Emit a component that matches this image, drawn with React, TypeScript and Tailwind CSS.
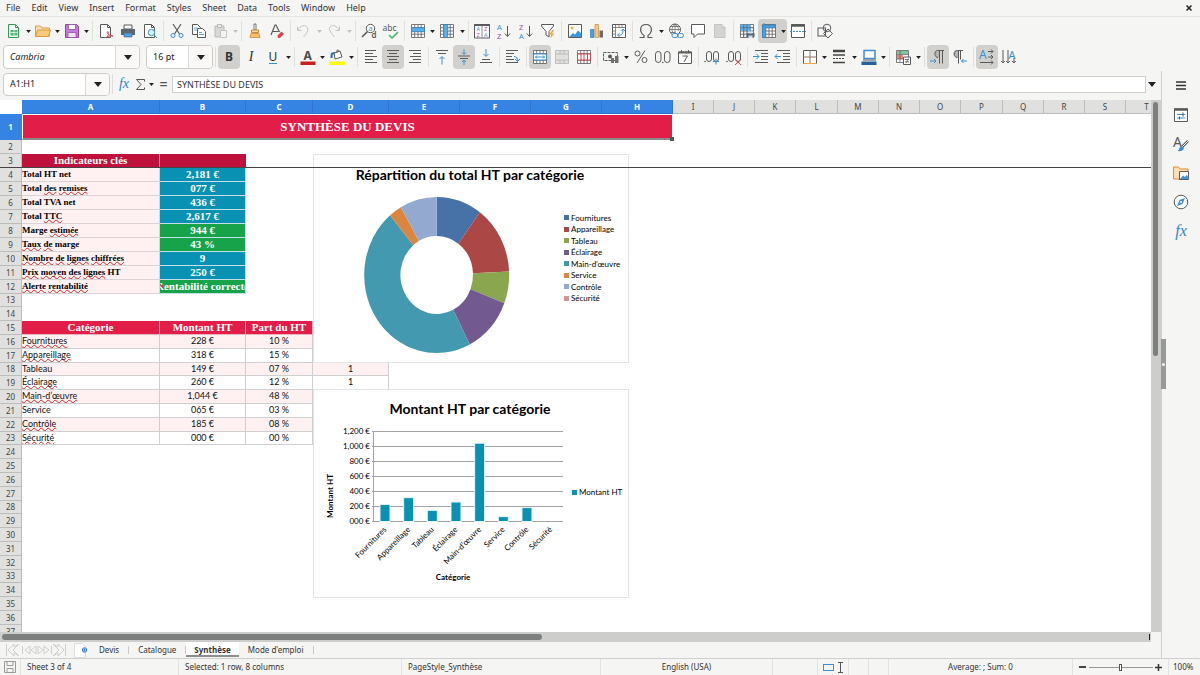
import type { ReactNode } from 'react'
import clsx from 'clsx'

const G = '#5a5a5a'
const B = '#3b8fd4'

const grid = <path d="M1.5 1.5h13v13h-13zM1.5 4.700h13M1.5 8h13M1.5 11.200h13M4.700 1.500v13M8 1.500v13M11.200 1.500v13" fill="#fff" stroke={G} strokeWidth=".8" />

const lines = (rows: number[][]) => rows.map(([x, y, w], i) => <path key={i} d={`M${x} ${y}h${w}`} stroke={G} />)

const icons: Record<string, ReactNode> = {
  new: <><path d="M2.500 1.500h7l3 3v10h-10z" fill="#fff" stroke="#2f9e52" /><path d="M9.500 1.500v3h3" fill="none" stroke="#2f9e52" /><path d="M4.500 7h7v5.500h-7z" fill="#52b373" /><path d="M4.500 9.500h7M8 7v5" stroke="#fff" strokeWidth=".7" /></>,
  open: <><path d="M.5 13V3h5L7 5h7.500v8z" fill="#fbe0ae" stroke="#dc9a45" /><path d="M.5 13.500l2-6.500h13l-2 6.500z" fill="#fbc877" stroke="#dc9a45" /></>,
  save: <><path d="M1.500 1.500h11l2 2v11h-13z" fill="#c77bd6" stroke="#91429f" /><path d="M4.500 1.500h7v5h-7z" fill="#fff" stroke="#91429f" strokeWidth=".7" /><path d="M4 9.500h8v5H4z" fill="#f2e4f5" stroke="#91429f" strokeWidth=".7" /></>,
  pdf: <><path d="M2.500 1.500h7l3 3v10h-10z" fill="#fff" stroke={G} /><path d="M9.500 1.500v3h3" fill="none" stroke={G} /><path d="M8 15c3-3 3-5 2-6.500-2 1 0 4 5 4.500-3-.5-5 0-7 2z" fill="none" stroke="#d9434e" /></>,
  print: <><path d="M4 2h8v4H4z" fill="#fff" stroke={G} /><path d="M1 6h14v6H1z" fill="#5c6670" /><path d="M4 10h8v4H4z" fill="#4ba0e0" stroke="#5c6670" strokeWidth=".7" /></>,
  preview: <><path d="M2.500 1.500h7l3 3v10h-10z" fill="#fff" stroke={G} /><path d="M9.500 1.500v3h3" fill="none" stroke={G} /><circle cx="9.500" cy="9.500" r="3.200" fill="#d9ecfa" stroke={B} /><path d="M12 12l3 3" stroke={B} /></>,
  cut: <><path d="M4 1l6.500 10M12 1L5.500 11" stroke={G} strokeWidth="1.200" /><circle cx="4" cy="12.500" r="2" fill="none" stroke={B} /><circle cx="12" cy="12.500" r="2" fill="none" stroke={B} /></>,
  copy: <><path d="M1.500 1.500h5l3 3v7h-8z" fill="#fff" stroke={G} /><path d="M6.500 5.500h5l3 3v6h-8z" fill="#fff" stroke={G} /><path d="M3 5h3M3 7h3M8 9.500h3M8 11.500h5" stroke={B} strokeWidth=".8" /></>,
  paste: <><path d="M2 3h9v11H2z" fill="#d8d8d6" stroke="#b9b9b7" /><path d="M4.500 1.500h4v3h-4z" fill="#eee" stroke="#b9b9b7" /><path d="M7.500 7.500h6v7h-6z" fill="#f3f3f2" stroke="#c4c4c2" /></>,
  brush: <><path d="M7 1h2v6H7z" fill="#fff" stroke={G} strokeWidth=".8" /><path d="M4.500 7h7v2.500h-7z" fill="#fbd9a5" stroke="#cf8a3a" /><path d="M4 10.500h8l1 4H3z" fill="#f9bf6d" stroke="#cf8a3a" strokeWidth=".8" /></>,
  clear: <><path d="M2 12L6 2h1l3.500 7M3.500 8.500h6" fill="none" stroke={G} strokeWidth="1.200" /><path d="M8.500 12.500l4-4 2.500 2.500-4 4H9z" fill="#e0444f" /></>,
  undo: <path d="M1.500 3.500v4h4M2 7c2-4 6-5.500 8.500-3.500S12 9 7.500 14" fill="none" stroke="#c4c4c2" />,
  redo: <path d="M13.500 3.500v4h-4M13 7c-2-4-6-5.500-8.500-3.500S4 9 8.500 14" fill="none" stroke="#c4c4c2" />,
  find: <><circle cx="9.500" cy="5.500" r="4.200" fill="#fff" stroke={G} /><path d="M6.500 8.500L1 14" stroke={G} strokeWidth="1.600" /><text x="7.500" y="8" fontSize="7" fill={B}>a</text><text x="10.500" y="15" fontSize="8" fontWeight="600" fill={G}>d</text></>,
  spell: <><text x="-.5" y="7.500" fontSize="8.500" fill={G}>abc</text><path d="M6 12l3 3 6-6" fill="none" stroke="#3fb26d" strokeWidth="1.500" /></>,
  rowIns: <>{grid}<path d="M1.500 4.700h13v4h-13z" fill="#5aaeea" stroke="#2f7fbf" strokeWidth=".7" /></>,
  colIns: <>{grid}<path d="M4.700 1.500h4v13h-4z" fill="#5aaeea" stroke="#2f7fbf" strokeWidth=".7" /></>,
  sort: <><path d="M.5 1.500h15v13.500H.5z" fill="#fff" stroke={G} /><path d="M.5 2h15" stroke={G} strokeWidth="2" /><path d="M8 2v12.500" stroke={G} strokeWidth=".7" /><text x="2.500" y="8" fontSize="5.500" fill={B}>A</text><text x="2.500" y="14" fontSize="5.500" fill="#a34fb5">Z</text><text x="10" y="8" fontSize="5.500" fill="#a34fb5">Z</text><text x="10" y="14" fontSize="5.500" fill={B}>A</text></>,
  asc: <><text x="1" y="7" fontSize="7.500" fill={B}>A</text><text x="1" y="15.500" fontSize="7.500" fill="#a34fb5">Z</text><path d="M11.500 3v10M8.800 10.500l2.700 3 2.700-3" fill="none" stroke={G} /></>,
  desc: <><text x="1" y="7" fontSize="7.500" fill="#a34fb5">Z</text><text x="1" y="15.500" fontSize="7.500" fill={B}>A</text><path d="M11.500 3v10M8.800 10.500l2.700 3 2.700-3" fill="none" stroke={G} /></>,
  filter: <><path d="M1.500 1.500h12v1.500L9 8.500V14l-3-2V8.500L1.500 3z" fill="#fff" stroke={G} /><path d="M12.500 7L9 11.500h2.500L10 15.500l4.500-5H12l2-3.500z" fill="#f3a445" /></>,
  image: <><path d="M1.500 1.500h13v13h-13z" fill="#fff" stroke={G} /><path d="M2 14l4-4 2 1.500 3-4 3.500 3V14z" fill="#3f97da" /><circle cx="5" cy="5" r="1.500" fill="#f3b34c" /></>,
  chart: <><path d="M1.500 6.500h3.500v8H1.500z" fill="#4ba0e0" stroke="#2f7fbf" strokeWidth=".7" /><path d="M6 1.500h3.500v13H6z" fill="#fbc877" stroke="#cf8a3a" strokeWidth=".7" /><path d="M10.500 7.500H14v7h-3.500z" fill="#6c6c6c" /></>,
  pivot: <><path d="M1.500 1.500h13v13h-13z" fill="#fff" stroke={G} /><path d="M1.500 4.500h13M4.500 1.500v13M8 1.500v3M11 1.500v3M1.500 8h3M1.500 11h3" stroke={G} strokeWidth=".7" /><path d="M7 12c4 1 5-2 5-5M10.500 8L12 6l1.800 2M8.500 10.500L6.500 12l2 1.700" fill="none" stroke={B} /></>,
  omega: <path d="M1.500 14.500h4.500v-2C1 9 1.500 1.500 8 1.500s7 7.500 2 11v2h4.500" fill="none" stroke={G} strokeWidth="1.200" />,
  link: <><circle cx="7" cy="6.500" r="5.500" fill="#fff" stroke={G} /><path d="M1.500 6.500h11M7 1v11M2.500 3.500h9M2.500 9.500h5M7 1C3 4 3 9 7 12M7 1c4 3 3.500 6 3 7" fill="none" stroke={G} strokeWidth=".7" /><rect x="4" y="10.500" width="6" height="4" rx="2" fill="#f5f5f4" stroke={B} /><rect x="9.500" y="10.500" width="6" height="4" rx="2" fill="none" stroke={B} /></>,
  comment: <path d="M1.500 1.500h13v9.500h-7L4 14.500V11H1.500z" fill="#fff" stroke={G} />,
  header: <><path d="M2.500 1.500h7.500l3 3v10H2.500z" fill="#d4d4d2" stroke="#c4c4c2" /><path d="M10 1.500v3h3" fill="#eee" stroke="#bbb" strokeWidth=".7" /></>,
  printArea: <>{grid}<path d="M1.500 1.500h10v6.500h-10z" fill="#5aaeea" /><path d="M1.500 4.700h13M4.700 1.500v13M8 1.500v8" stroke={G} strokeWidth=".6" /><path d="M7.500 10h8v4h-8z" fill="#5c6670" /><path d="M9.500 8.500h4v2h-4zM9.500 12.500h4v2.500h-4z" fill="#cfe4f5" /></>,
  freeze: <>{grid}<path d="M3 2h11.500v2.700H4.700v9.800H1.500V4z" fill="#4ba0e0" stroke="#2f7fbf" strokeWidth=".7" /><path d="M3 0v5M.5 2.500h5" stroke={B} /></>,
  split: <><path d="M1.500 1.500h13v13h-13z" fill="#fff" stroke={G} /><path d="M1 2.500h14" stroke={G} strokeWidth="2.500" /><path d="M0 8.500h16" stroke={B} strokeDasharray="2 1" /></>,
  shapes: <><rect x="1" y="5" width="7.500" height="8" fill="none" stroke={G} /><circle cx="10" cy="5" r="3.800" fill="none" stroke={G} /><path d="M11 6l4.500 4.500L11 15l-4.500-4.500z" fill="none" stroke={G} /></>,
  fontColor: <><text x="3.500" y="10.500" fontSize="12" fontWeight="700" fill="#4a4a4a">A</text><path d="M.5 12.500h15v3.500H.5z" fill="#c9211e" /></>,
  fill: <><path d="M5 4l6-2 2 6-7 2z" fill="#fff" stroke={G} /><path d="M8 4c-1-4 2-4 2-1" fill="none" stroke={G} /><path d="M2.500 9c0-4 0-5 3-5" fill="none" stroke="#1c6fb5" strokeWidth="2" /><path d="M0 12.500h16v3.500H0z" fill="#ffff00" /></>,
  left: lines([[2, 1.500, 11], [2, 4.500, 8], [2, 7.500, 12], [2, 10.500, 8], [2, 13.500, 12]]),
  center: lines([[2, 1.500, 12], [4, 4.500, 8], [2, 7.500, 12], [4, 10.500, 8], [2, 13.500, 12]]),
  right: lines([[2, 1.500, 12], [6, 4.500, 8], [3, 7.500, 11], [6, 10.500, 8], [2, 13.500, 12]]),
  top: <>{lines([[2, 1.500, 12], [4, 4.500, 8]])}<path d="M8 15.500V8M5.500 10L8 7.500l2.500 2.500" fill="none" stroke={B} /></>,
  middle: <>{lines([[2, 7, 12], [4, 9.500, 8]])}<path d="M8 .5v4.500M6 3.500l2 2 2-2M8 16v-4.500M6 13l2-2 2 2" fill="none" stroke={B} /></>,
  bottom: <>{lines([[4, 10.500, 8], [2, 13.500, 12]])}<path d="M8 0v7M5.500 5L8 7.500 10.500 5" fill="none" stroke={B} /></>,
  wrap: <>{lines([[1, 1.500, 12], [1, 4.500, 8], [1, 7.500, 6], [1, 10.500, 8], [1, 13.500, 12]])}<path d="M9 7.500c3 0 3.500 2 3.500 4.500M10 10l2.500 2.500L15 10" fill="none" stroke={B} /></>,
  merge: <>{grid}<path d="M1.500 5h13v6h-13z" fill="#fff" stroke={B} /><path d="M3.500 8h9M5 6.500L3.500 8 5 9.500M11 6.500L12.500 8 11 9.500" fill="none" stroke={B} /></>,
  unmerge: <path d="M1.500 1.500h13v13h-13zM1.500 5h13M1.500 11h13M6 1.500V5M10 1.500V5M6 11v3.500M10 11v3.500" fill="#e0e0de" stroke="#b5b5b3" strokeWidth=".8" />,
  splitCells: <>{grid}<path d="M1.500 5h13v6h-13zM5 5v6M8 5v6M11.500 5v6" fill="#fff" stroke="#e0444f" /></>,
  currency: <><path d="M.5 3.500h14v8h-14z" fill="#f3f3f2" stroke={G} strokeDasharray="3 1" /><circle cx="7" cy="7.500" r="2" fill={G} /><path d="M8 9h3v5H8zM12 7h3.500v7H12z" fill="#707070" /></>,
  percent: <><circle cx="4.500" cy="4.500" r="2.500" fill="none" stroke={G} /><circle cx="11.500" cy="11" r="2.500" fill="none" stroke={G} /><path d="M12 1.500l-8 12.500" stroke={G} /></>,
  number: <><rect x=".5" y="2.500" width="5.500" height="11" rx="2.700" fill="none" stroke={G} /><rect x="9.500" y="2.500" width="5.500" height="11" rx="2.700" fill="none" stroke={G} /><circle cx="7.800" cy="13.500" r=".8" fill={G} /></>,
  date: <><path d="M1.500 3h13v11.500h-13z" fill="#fff" stroke={G} /><path d="M1.500 3.500h13" stroke={G} strokeWidth="2" /><path d="M4.500 1v3M11.500 1v3M5.500 7h5l-3.500 6" fill="none" stroke={G} /></>,
  addDec: <><circle cx="1" cy="12.500" r=".8" fill={G} /><rect x="2.500" y="2.500" width="5" height="10" rx="2.500" fill="none" stroke={G} /><rect x="9.500" y="2.500" width="5" height="10" rx="2.500" fill="none" stroke={G} /><path d="M12 9.500v6M9 12.500h6" stroke={B} /></>,
  delDec: <><circle cx="1" cy="12.500" r=".8" fill={G} /><rect x="2.500" y="2.500" width="5" height="10" rx="2.500" fill="none" stroke={G} /><rect x="9.500" y="2.500" width="5" height="10" rx="2.500" fill="none" stroke={G} /><path d="M9 10l6 6M15 10l-6 6" stroke="#e0444f" /></>,
  indent: <>{lines([[2, 1.500, 13], [8, 4.500, 7], [8, 7.500, 7], [8, 10.500, 7], [2, 13.500, 13]])}<path d="M0 7.500h6M3.500 5L6 7.500 3.500 10" fill="none" stroke={B} /></>,
  outdent: <>{lines([[2, 1.500, 13], [8, 4.500, 7], [8, 7.500, 7], [8, 10.500, 7], [2, 13.500, 13]])}<path d="M0 7.500h6M2.500 5L0 7.500 2.500 10" fill="none" stroke={B} /></>,
  borders: <><path d="M1.500 1.500h13v13h-13z" fill="#fff" stroke={G} /><path d="M8 1.500v13M1.500 8h13" stroke="#8a7a5a" /><path d="M1.500 14.500h13" stroke="#f3a445" /></>,
  lineStyle: <><path d="M2 2h12" stroke="#444" strokeWidth="2.500" /><path d="M2 6h12" stroke="#444" strokeWidth="1.500" /><path d="M2 9.500h12" stroke="#444" strokeDasharray="2 1" /><path d="M2 13.500h12" stroke="#444" strokeWidth="1.500" /></>,
  lineColor: <><path d="M3 1.500h11v8H3z" fill="#fff" stroke={B} strokeWidth="1.500" /><path d="M2 11h13" stroke={G} /><path d="M.5 12.500h15v3.500H.5z" fill="#2a6099" /></>,
  condFmt: <><path d="M1.500 1.500h12v12h-12z" fill="#fff" stroke={G} strokeWidth=".8" /><path d="M2 2h11v3H2z" fill="#7cc596" /><path d="M2 6h6v4H2z" fill="#e8857b" /><path d="M5 1.500v12M1.500 5.500h12M1.500 10h7" stroke={G} strokeWidth=".7" /><path d="M8.500 8h7v7.500h-7z" fill="#fff" stroke={G} /><path d="M10 10.500h4M10 12.800h4M13.500 9.500l-2.500 4.500" stroke={G} strokeWidth=".8" /></>,
  ltr: <><path d="M9.500 1.500v7C3 8.500 3 1.500 8 1.500z" fill="#b5b5b3" /><path d="M14 1.500H7.500C4 1.500 4 8.500 8 8.500M9.500 1.500v13M12.500 1.500v13" fill="none" stroke={G} /><path d="M0 12h6M4 10l2 2-2 2" fill="none" stroke={B} /></>,
  rtl: <><path d="M6.500 1.500v7c-6 0-6-7-2-7z" fill="#b5b5b3" /><path d="M11 1.500H5.500C1 1.500 1 8.500 5.500 8.500M6.500 1.500v13M8.500 1.500v9" fill="none" stroke={G} /><path d="M15 12H9.500M11.500 10l-2 2 2 2" fill="none" stroke={B} /></>,
  horizontal: <><text x="0" y="9.500" fontSize="12" fill={B}>A</text><path d="M9 2.500h5M12 .5l2 2-2 2M9 8h5M12 6l2 2-2 2M1 13.500h13M12 11.500l2 2-2 2" fill="none" stroke={G} /></>,
  vertical: <><text x="7.500" y="9.500" fontSize="11" fill={B}>A</text><path d="M2 1v13M.2 12L2 14l1.800-2M7 1v13M5.200 12L7 14l1.800-2M13 9v5M11.200 12l1.800 2 1.800-2" fill="none" stroke={G} /></>,
  props: <><path d="M1.500 2h13v12.500h-13z" fill="#fff" stroke={G} /><path d="M1 2.500h14" stroke={G} strokeWidth="2.500" /><path d="M4 7.500h8M4 11h8" stroke={B} /><path d="M10 5.500v4M6.500 9.500v3" stroke={G} /></>,
  styles: <><text x="0" y="11" fontSize="14" fill={G}>A</text><path d="M15 5l-6 6" stroke={G} strokeWidth="2.500" /><path d="M15 5l-6 6" stroke="#fff" /><path d="M9 10l2 2c-1 3-3 3.500-7 3 2-.5 2-1.500 2.500-3 .5-1.500 1.500-2 2.500-2z" fill={B} /></>,
  gallery: <><path d="M.5 14V2h5l1.500 2h8v10z" fill="#fbe0ae" stroke="#e08a3a" /><path d="M6.500 6.500h9v8h-9z" fill="#fff" stroke={G} /><path d="M7 14l3-3.500 2 1.500 1.500-2 2 2v2z" fill="#3f97da" /></>,
  navigator: <><circle cx="8" cy="8" r="6.800" fill="#fff" stroke={G} /><path d="M12 4l-2.500 6L4 12l2.500-6z" fill={B} /><circle cx="8" cy="8" r="1" fill="#fff" /></>,
}

function Icon({ name }: { name: string }) {
  return (
    <svg viewBox="0 0 16 16" className="size-4 shrink-0 overflow-visible" fontFamily="Noto Sans, sans-serif">
      {icons[name]}
    </svg>
  )
}

function Caret({ big, dim }: { big?: boolean; dim?: boolean }) {
  return (
    <svg viewBox="0 0 8 5" className={clsx('shrink-0', big ? 'h-[5px] w-2' : 'h-[3px] w-[5px]', dim ? 'fill-[#c0c0be]' : 'fill-[#222]')}>
      <path d="M0 0h8L4 5z" />
    </svg>
  )
}

type ToolProps = { label: string; icon?: string; on?: boolean; drop?: 'narrow' | 'wide'; dim?: boolean; children?: ReactNode }

function Tool({ label, icon, on, drop, dim, children }: ToolProps) {
  return (
    <span className={clsx('flex h-6 shrink-0 rounded-sm', on && 'bg-[#d2d0cc]')}>
      <button aria-label={label} className="flex w-[22px] items-center justify-center">
        {icon ? <Icon name={icon} /> : children}
      </button>
      {drop && (
        <button aria-label={`${label} menu`} className={clsx('flex items-center justify-center', drop === 'wide' ? 'w-2' : 'w-[7px]')}>
          <Caret dim={dim} />
        </button>
      )}
    </span>
  )
}

const Sep = () => <span className="mx-[2px] h-5 w-px shrink-0 self-center bg-[#e0dfdd]" />

function Combo({ label, value, className, italic }: { label: string; value: string; className: string; italic?: boolean }) {
  return (
    <span className={clsx('flex shrink-0 overflow-hidden rounded border border-[#cfccc8] bg-white', className)}>
      <input aria-label={label} defaultValue={value} className={clsx('w-0 flex-1 px-1.5 text-[#222] outline-none', italic && 'italic')} />
      <button aria-label={`${label} list`} className="flex w-6 items-center justify-center border-l border-[#dcdad7] bg-[#faf9f8]">
        <Caret big />
      </button>
    </span>
  )
}

const menus = ['File', 'Edit', 'View', 'Insert', 'Format', 'Styles', 'Sheet', 'Data', 'Tools', 'Window', 'Help']

function StandardBar() {
  return (
    <div className="flex h-7 items-center pl-[3px]">
      <Tool label="New" icon="new" drop="narrow" />
      <Tool label="Open" icon="open" drop="narrow" />
      <Tool label="Save" icon="save" drop="narrow" />
      <Sep />
      <Tool label="Export as PDF" icon="pdf" />
      <Tool label="Print" icon="print" />
      <Tool label="Print preview" icon="preview" />
      <Sep />
      <Tool label="Cut" icon="cut" />
      <Tool label="Copy" icon="copy" />
      <Tool label="Paste" icon="paste" drop="narrow" dim />
      <Sep />
      <Tool label="Clone formatting" icon="brush" />
      <Tool label="Clear formatting" icon="clear" />
      <Sep />
      <Tool label="Undo" icon="undo" drop="wide" dim />
      <Tool label="Redo" icon="redo" drop="wide" dim />
      <Sep />
      <Tool label="Find" icon="find" />
      <Tool label="Spelling" icon="spell" />
      <Sep />
      <Tool label="Row" icon="rowIns" drop="narrow" />
      <Tool label="Column" icon="colIns" drop="wide" />
      <Sep />
      <Tool label="Sort" icon="sort" />
      <Tool label="Sort ascending" icon="asc" />
      <Tool label="Sort descending" icon="desc" />
      <Tool label="AutoFilter" icon="filter" />
      <Sep />
      <Tool label="Image" icon="image" />
      <Tool label="Chart" icon="chart" />
      <Tool label="Pivot table" icon="pivot" />
      <Sep />
      <Tool label="Special character" icon="omega" drop="wide" />
      <Tool label="Hyperlink" icon="link" />
      <Tool label="Comment" icon="comment" />
      <Tool label="Headers and footers" icon="header" />
      <Sep />
      <Tool label="Print area" icon="printArea" />
      <Tool label="Freeze rows and columns" icon="freeze" drop="narrow" on />
      <Tool label="Split window" icon="split" />
      <Sep />
      <Tool label="Draw functions" icon="shapes" />
    </div>
  )
}

function FormatBar() {
  return (
    <div className="flex h-[26px] items-start pb-0.5 pl-[3px]">
      <Combo label="Font name" value="Cambria" className="mr-1.5 h-6 w-[137px]" italic />
      <Combo label="Font size" value="16 pt" className="h-6 w-[67px]" />
      <Sep />
      <Tool label="Bold" on><b className="text-xs">B</b></Tool>
      <Tool label="Italic"><i className="font-['Liberation_Serif',serif] text-sm">I</i></Tool>
      <Tool label="Underline" drop="wide"><span className="border-b border-[#3b8fd4] text-xs leading-3">U</span></Tool>
      <Sep />
      <Tool label="Font color" icon="fontColor" drop="narrow" />
      <Tool label="Background color" icon="fill" drop="narrow" />
      <Sep />
      <Tool label="Align left" icon="left" />
      <Tool label="Align center" icon="center" on />
      <Tool label="Align right" icon="right" />
      <Sep />
      <Tool label="Align top" icon="top" />
      <Tool label="Center vertically" icon="middle" on />
      <Tool label="Align bottom" icon="bottom" />
      <Sep />
      <Tool label="Wrap text" icon="wrap" />
      <Sep />
      <Tool label="Merge and center" icon="merge" on />
      <Tool label="Merge cells" icon="unmerge" />
      <Tool label="Unmerge cells" icon="splitCells" />
      <Sep />
      <Tool label="Currency" icon="currency" drop="wide" />
      <Tool label="Percent" icon="percent" />
      <Tool label="Number" icon="number" />
      <Tool label="Date" icon="date" />
      <Sep />
      <Tool label="Add decimal" icon="addDec" />
      <Tool label="Delete decimal" icon="delDec" />
      <Sep />
      <Tool label="Increase indent" icon="indent" />
      <Tool label="Decrease indent" icon="outdent" />
      <Sep />
      <Tool label="Borders" icon="borders" drop="narrow" />
      <Tool label="Border style" icon="lineStyle" drop="wide" />
      <Tool label="Border color" icon="lineColor" drop="narrow" />
      <Sep />
      <Tool label="Conditional" icon="condFmt" drop="wide" />
      <Sep />
      <Tool label="Left to right" icon="ltr" on />
      <Tool label="Right to left" icon="rtl" />
      <Sep />
      <Tool label="Horizontal text" icon="horizontal" on />
      <Tool label="Vertical text" icon="vertical" />
    </div>
  )
}

function FormulaBar() {
  return (
    <div className="flex h-[29px] items-center pb-[3px] pl-[3px]">
      <Combo label="Name box" value="A1:H1" className="h-[23px] w-[107px]" />
      <Sep />
      <button aria-label="Function wizard" className="w-[18px] font-['Liberation_Serif',serif] text-sm leading-4 text-[#2f86cf] italic">fx</button>
      <button aria-label="Select function" className="flex w-3.5 justify-center">
        <svg viewBox="0 0 9 11" className="h-[11px] w-[9px] fill-none stroke-[#555]"><path d="M8.500 2.500v-2h-8L5 5.500l-4.500 5h8v-2" /></svg>
      </button>
      <button aria-label="Select function menu" className="flex w-2 justify-center"><Caret /></button>
      <button aria-label="Formula" className="w-[17px] text-sm leading-4 font-semibold text-[#555]">=</button>
      <input aria-label="Input line" defaultValue="SYNTHÈSE DU DEVIS" className="h-[17px] min-w-0 flex-1 border border-[#d0d0ce] bg-white px-1 text-[9px] outline-none" />
      <button aria-label="Expand formula bar" className="flex w-[15px] justify-start pl-0.5"><Caret big /></button>
    </div>
  )
}

// "_word_" marks a word underlined by the spell checker
const kpis = [
  ['Total HT net', '2,181 €'],
  ['Total _des_ _remises_', '077 €'],
  ['Total TVA net', '436 €'],
  ['Total _TTC_', '2,617 €'],
  ['Marge _estimée_', '944 €'],
  ['_Taux_ _de_ marge', '43 %'],
  ['_Nombre_ _de_ _lignes_ _chiffrées_', '9'],
  ['_Prix_ _moyen_ _des_ _lignes_ HT', '250 €'],
  ['_Alerte_ _rentabilité_', 'Rentabilité correcte'],
]

const categories = [
  { name: 'Fournitures', value: 228, amount: '228 €', share: '10 %', color: '#4672a8' },
  { name: 'Appareillage', value: 318, amount: '318 €', share: '15 %', color: '#ab4744' },
  { name: 'Tableau', value: 149, amount: '149 €', share: '07 %', color: '#8aa64f', ok: true },
  { name: 'Éclairage', value: 260, amount: '260 €', share: '12 %', color: '#725990' },
  { name: 'Main-d’œuvre', value: 1044, amount: '1,044 €', share: '48 %', color: '#4299b0' },
  { name: 'Service', value: 65, amount: '065 €', share: '03 %', color: '#dc853e', ok: true },
  { name: 'Contrôle', value: 185, amount: '185 €', share: '08 %', color: '#93a9d0' },
  { name: 'Sécurité', value: 0, amount: '000 €', share: '00 %', color: '#d09493' },
]

const wavy = 'underline decoration-[#e02020] decoration-wavy decoration-1 underline-offset-0 [text-decoration-skip-ink:none]'

function Spelled({ text }: { text: string }) {
  return text.split(' ').map((w, i) => (
    <span key={i}>
      {i > 0 && ' '}
      {w.startsWith('_') ? <span className={wavy}>{w.slice(1, -1)}</span> : w}
    </span>
  ))
}

const cell = 'overflow-hidden border-r border-b p-0 whitespace-nowrap'
const head = "align-top font-['Liberation_Serif',serif] text-[11px] font-bold leading-[13px] text-white"
const body = "align-top font-[Lato,sans-serif] text-[9px] leading-3 border-[#cfcfd2] text-[#111]"

function RowCells({ n }: { n: number }) {
  if (n === 1) {
    return (
      <td colSpan={8} className="relative border border-b-2 border-white border-b-[#8a8a8a] bg-[#e11d48] p-0 text-center font-['Liberation_Serif',serif] text-[13px] leading-4 font-bold text-white">
        SYNTHÈSE DU DEVIS
        <span className="absolute -right-0.5 -bottom-[3px] size-1 bg-[#555]" />
      </td>
    )
  }
  if (n === 3) {
    return (
      <>
        <td className={clsx(cell, head, 'border-r-[#d9a3ae] border-b-[#be123c] bg-[#be123c] text-center')}>Indicateurs clés</td>
        <td className={clsx(cell, 'border-[#be123c] bg-[#be123c]')} />
      </>
    )
  }
  if (n >= 4 && n <= 12) {
    const [label, value] = kpis[n - 4]
    const green = n === 8 || n === 9 || n === 12
    return (
      <>
        <td className={clsx(cell, "border-[#d9d3d5] bg-[#fff1f2] align-top font-['Liberation_Serif',serif] text-[9px] leading-[13px] font-bold text-black")}>
          <Spelled text={label} />
        </td>
        <td className={clsx(cell, head, 'relative border-[#c5dfe6]', green ? 'bg-[#16a34a]' : 'bg-[#0891b2]')}>
          <span className="flex justify-center">{value}</span>
          {n === 12 && <span className="absolute top-1 left-0 border-y-2 border-r-3 border-y-transparent border-r-[#e33]" />}
        </td>
      </>
    )
  }
  if (n === 15) {
    return ['Catégorie', 'Montant HT', 'Part du HT'].map((t) => (
      <td key={t} className={clsx(cell, head, 'border-[#eab3bf] bg-[#e11d48] text-center')}>{t}</td>
    ))
  }
  if (n >= 16 && n <= 23) {
    const c = categories[n - 16]
    const tint = n % 2 === 0 && 'bg-[#fff1f2]'
    return (
      <>
        <td className={clsx(cell, body, tint)}><span className={clsx(!c.ok && wavy)}>{c.name}</span></td>
        <td className={clsx(cell, body, tint, 'text-center')}>{c.amount}</td>
        <td className={clsx(cell, body, tint, 'text-center')}>{c.share}</td>
        {(n === 18 || n === 19) && <td className={clsx(cell, body, tint, 'text-center')}>1</td>}
      </>
    )
  }
  return null
}

const narrow = [41, 41, 41, 42]
const widths = [22, 138, 86, 67, 76, 71, 71, 71, 71, ...narrow, ...narrow, ...narrow]
const letters = 'ABCDEFGHIJKLMNOPQRST'.split('')

function rowHeight(n: number) {
  if (n === 1) return 'h-[26px]'
  return n > 4 && (n - 3) % 5 === 0 ? 'h-[13px]' : 'h-[14px]'
}

function Grid() {
  return (
    <table className="w-px table-fixed border-separate border-spacing-0">
      <colgroup>
        {widths.map((w, i) => <col key={i} style={{ width: w }} />)}
      </colgroup>
      <thead>
        <tr className="h-[14px] text-[8px] leading-3">
          <td className="p-0" />
          {letters.map((l, i) => (
            <th
              key={l}
              className={clsx('border-r border-b p-0', i < 8 ? 'border-r-[#2f76cc] border-b-[#2f76cc] bg-[#3584e4] font-bold text-white' : 'border-[#bdbdbb] bg-[#e0e0de] font-normal text-[#444]')}
            >
              {l}
            </th>
          ))}
        </tr>
      </thead>
      <tbody>
        {Array.from({ length: 37 }, (_, i) => i + 1).map((n) => (
          <tr key={n} className={rowHeight(n)}>
            <th className={clsx('border-r border-b p-0 text-[8px] leading-3', n === 1 ? 'border-[#3584e4] bg-[#3584e4] font-bold text-white' : 'border-[#bdbdbb] bg-[#e0e0de] font-normal text-[#444]')}>
              {n}
            </th>
            <RowCells n={n} />
          </tr>
        ))}
      </tbody>
    </table>
  )
}

const total = categories.reduce((s, c) => s + c.value, 0)

function slice(from: number, to: number) {
  const p = (t: number, rx: number, ry: number) =>
    `${122.700 + rx * Math.sin(t * 2 * Math.PI)} ${120 - ry * Math.cos(t * 2 * Math.PI)}`
  const large = to - from > 0.5 ? 1 : 0
  return `M${p(from, 72.500, 78)}A72.500 78 0 ${large} 1 ${p(to, 72.500, 78)}L${p(to, 36.300, 39)}A36.300 39 0 ${large} 0 ${p(from, 36.300, 39)}Z`
}

function DonutChart() {
  let acc = 0
  return (
    <svg width="316" height="209" className="absolute top-[54px] left-[313px] border border-[#e4e4e4] bg-white" fontFamily="Lato, sans-serif">
      <text x="156" y="25" textAnchor="middle" fontSize="14" fontWeight="700">Répartition du total HT par catégorie</text>
      {categories.map((c) => {
        const from = acc
        acc += c.value / total
        return <path key={c.name} d={slice(from, acc)} fill={c.color} />
      })}
      {categories.map((c, i) => (
        <g key={c.name} fontSize="8">
          <rect x="250" y={Math.round(60 + i * 11.500)} width="5" height="5" fill={c.color} />
          <text x="257" y={65.500 + i * 11.500}>{c.name}</text>
        </g>
      ))}
    </svg>
  )
}

const ticks = ['000 €', '200 €', '400 €', '600 €', '800 €', '1,000 €', '1,200 €']

function BarChart() {
  return (
    <svg width="316" height="209" className="absolute top-[289px] left-[313px] border border-[#e4e4e4] bg-white" fontFamily="Lato, sans-serif" fontSize="8">
      <text x="156" y="24" textAnchor="middle" fontSize="14" fontWeight="700">Montant HT par catégorie</text>
      {ticks.map((t, i) => (
        <g key={t}>
          <path d={`M58 ${131.500 - i * 15}h191`} stroke="#a3a3a3" />
          <text x="56" y={134 - i * 15} textAnchor="end">{t}</text>
        </g>
      ))}
      <path d="M59.500 41v91" stroke="#a3a3a3" />
      {categories.map((c, i) => {
        const x = 71 + i * 23.660
        const h = (c.value / 1200) * 90
        return (
          <g key={c.name}>
            <rect x={x - 5} y={131.500 - h} width="10" height={h} fill="#0891b2" stroke="#e8f6fa" />
            <text transform={`translate(${x + 2} 140) rotate(-45)`} textAnchor="end">{c.name}</text>
          </g>
        )
      })}
      <text transform="translate(19 106) rotate(-90)" textAnchor="middle" fontWeight="700">Montant HT</text>
      <text x="139" y="190" textAnchor="middle" fontWeight="700">Catégorie</text>
      <rect x="258" y="100" width="5" height="5" fill="#0891b2" />
      <text x="265" y="105">Montant HT</text>
    </svg>
  )
}

function SheetArea() {
  return (
    <div className="flex min-h-0 flex-1">
      <div className="relative min-w-0 flex-1 overflow-hidden bg-white">
        <Grid />
        <DonutChart />
        <BarChart />
        <div className="absolute inset-x-0 top-[67px] h-px bg-[#444]" />
      </div>
      <div className="w-[10px] bg-[#cdcdcb] px-0.5 pt-0.5">
        <div className="h-[48%] w-[5px] rounded-full bg-[#7d7f7e]" />
      </div>
    </div>
  )
}

function Tabs() {
  const tab = 'px-[9px] leading-[15px]'
  const bar = <span className="mt-1 h-2 w-px bg-[#c9c9c7]" />
  return (
    <div className="flex h-4 items-start pl-1.5 text-[8px]">
      <svg viewBox="0 0 60 12" className="mt-0.5 h-3 w-[60px] fill-none stroke-[#cfcfcd]">
        <path d="M.5 0v12M2 6l6-6v3l5-3-6 6 6 6-5-3v3zM16.500 2v8M19 6l5-4v8zM25 6l5-4v8zM32 2v8l5-4zM38 2v8l5-4zM45.500 2v8M58 6l-6-6v3l-5-3 6 6-6 6 5-3v3zM59.500 0v12" />
      </svg>
      <button aria-label="Add sheet" className="mr-0.5 ml-2 h-4 w-3.5">
        <svg viewBox="0 0 14 15" className="h-[15px] w-3.5">
          <path d="M.5.500h8l3 3v11H.5z" fill="#fff" stroke="#ddd" />
          <circle cx="10.500" cy="7" r="2.200" fill="#fff" stroke="#2a6fc0" />
          <path d="M10.500 5.500v3M9 7h3" stroke="#2a6fc0" strokeWidth=".8" />
        </svg>
      </button>
      <button className={tab}>Devis</button>
      {bar}
      <button className={tab}>Catalogue</button>
      {bar}
      <button className="h-[15px] border-b-2 border-[#8d8d8b] bg-white px-2 leading-[15px] font-bold text-[#333]">Synthèse</button>
      <button className={tab}>Mode d'emploi</button>
      {bar}
    </div>
  )
}

function StatusBar() {
  const part = 'flex h-full items-center border-r border-[#e3e2e0]'
  return (
    <footer className="flex h-[17px] shrink-0 items-center border-t border-[#cfcfcd] text-[8px]">
      <span className={clsx(part, 'w-[21px] justify-center')}>
        <svg viewBox="0 0 12 12" className="size-3 fill-none stroke-[#9a9a98]"><path d="M.5.500h11v11H.5zM3 .5v4h6v-4M3 11.500v-4h6v4" /></svg>
      </span>
      <span className={clsx(part, 'w-[158px] pl-1.5')}>Sheet 3 of 4</span>
      <span className={clsx(part, 'w-[223px] pl-1.5')}>Selected: 1 row, 8 columns</span>
      <span className={clsx(part, 'w-[199px] pl-1.5')}>PageStyle_Synthèse</span>
      <span className={clsx(part, 'flex-1 justify-center')}>English (USA)</span>
      <span className={clsx(part, 'w-[45px]')} />
      <span className={clsx(part, 'w-[31px] justify-center gap-1')}>
        <span className="h-[7px] w-[11px] border border-[#3b8fd4]" />
        <svg viewBox="0 0 5 11" className="h-[11px] w-[5px] fill-none stroke-[#555]"><path d="M0 .5h5M0 10.500h5M2.500 0v11" /></svg>
      </span>
      <span className={clsx(part, 'w-5')} />
      <span className={clsx(part, 'w-5')} />
      <span className={clsx(part, 'w-[184px] justify-center')}>Average: ; Sum: 0</span>
      <span className={clsx(part, 'w-24 justify-between px-1.5')}>
        <button aria-label="Zoom out" className="h-0.5 w-[7px] bg-[#444]" />
        <input
          aria-label="Zoom"
          type="range"
          defaultValue="50"
          className="h-3 w-16 appearance-none bg-[linear-gradient(#999,#999)] bg-[length:100%_1px] bg-center bg-no-repeat [&::-webkit-slider-thumb]:h-[7px] [&::-webkit-slider-thumb]:w-[3px] [&::-webkit-slider-thumb]:appearance-none [&::-webkit-slider-thumb]:border [&::-webkit-slider-thumb]:border-[#555] [&::-webkit-slider-thumb]:bg-white"
        />
        <button aria-label="Zoom in">
          <svg viewBox="0 0 7 7" className="size-[7px] stroke-[#333]"><path d="M3.500 0v7M0 3.500h7" strokeWidth="1.500" /></svg>
        </button>
      </span>
      <span className="w-[31px] pl-1">100%</span>
    </footer>
  )
}

function Sidebar() {
  return (
    <aside className="relative flex w-[39px] shrink-0 flex-col border-l border-[#d0d0ce]">
      <button aria-label="Sidebar settings" className="flex h-[29px] items-center justify-center">
        <svg viewBox="0 0 10 9" className="h-[9px] w-2.5 stroke-[#333]"><path d="M0 1h10M0 4.500h10M0 8h10" strokeWidth="1.500" /></svg>
      </button>
      {['props', 'styles', 'gallery', 'navigator'].map((n) => (
        <button key={n} aria-label={n} className="flex h-[29px] items-center justify-center"><Icon name={n} /></button>
      ))}
      <button aria-label="functions" className="h-[29px] font-['Liberation_Serif',serif] text-base leading-5 text-[#2f86cf] italic">fx</button>
      <button aria-label="Hide sidebar" className="absolute top-[268px] -left-px flex h-[50px] w-[5px] items-center justify-center bg-[#989a99]">
        <span className="size-[3px] rounded-full bg-white" />
      </button>
    </aside>
  )
}

export default function App() {
  return (
    <div className="flex h-screen flex-col overflow-hidden bg-[#f5f5f4] font-['Noto_Sans',sans-serif] text-[9px] text-[#333]">
      <nav className="flex h-[17px] shrink-0 items-center gap-[11px] border-b border-[#e4e4e2] pl-1.5">
        {menus.map((m) => <button key={m}>{m}</button>)}
        <button aria-label="Close" className="mr-2 ml-auto">
          <svg viewBox="0 0 6 6" className="size-1.5 stroke-[#222]"><path d="M.5.500l5 5M5.500.500l-5 5" strokeWidth="1.500" /></svg>
        </button>
      </nav>
      <StandardBar />
      <FormatBar />
      <div className="flex min-h-0 flex-1">
        <main className="flex min-w-0 flex-1 flex-col">
          <FormulaBar />
          <SheetArea />
          <div className="mr-[10px] flex h-[10px] shrink-0 items-center justify-between bg-[#cdcdcb] pr-px pl-0.5">
            <div className="h-1.5 w-[47%] rounded-full bg-[#7d7f7e]" />
            <div className="h-1.5 w-px bg-[#222]" />
          </div>
          <Tabs />
        </main>
        <Sidebar />
      </div>
      <StatusBar />
    </div>
  )
}
